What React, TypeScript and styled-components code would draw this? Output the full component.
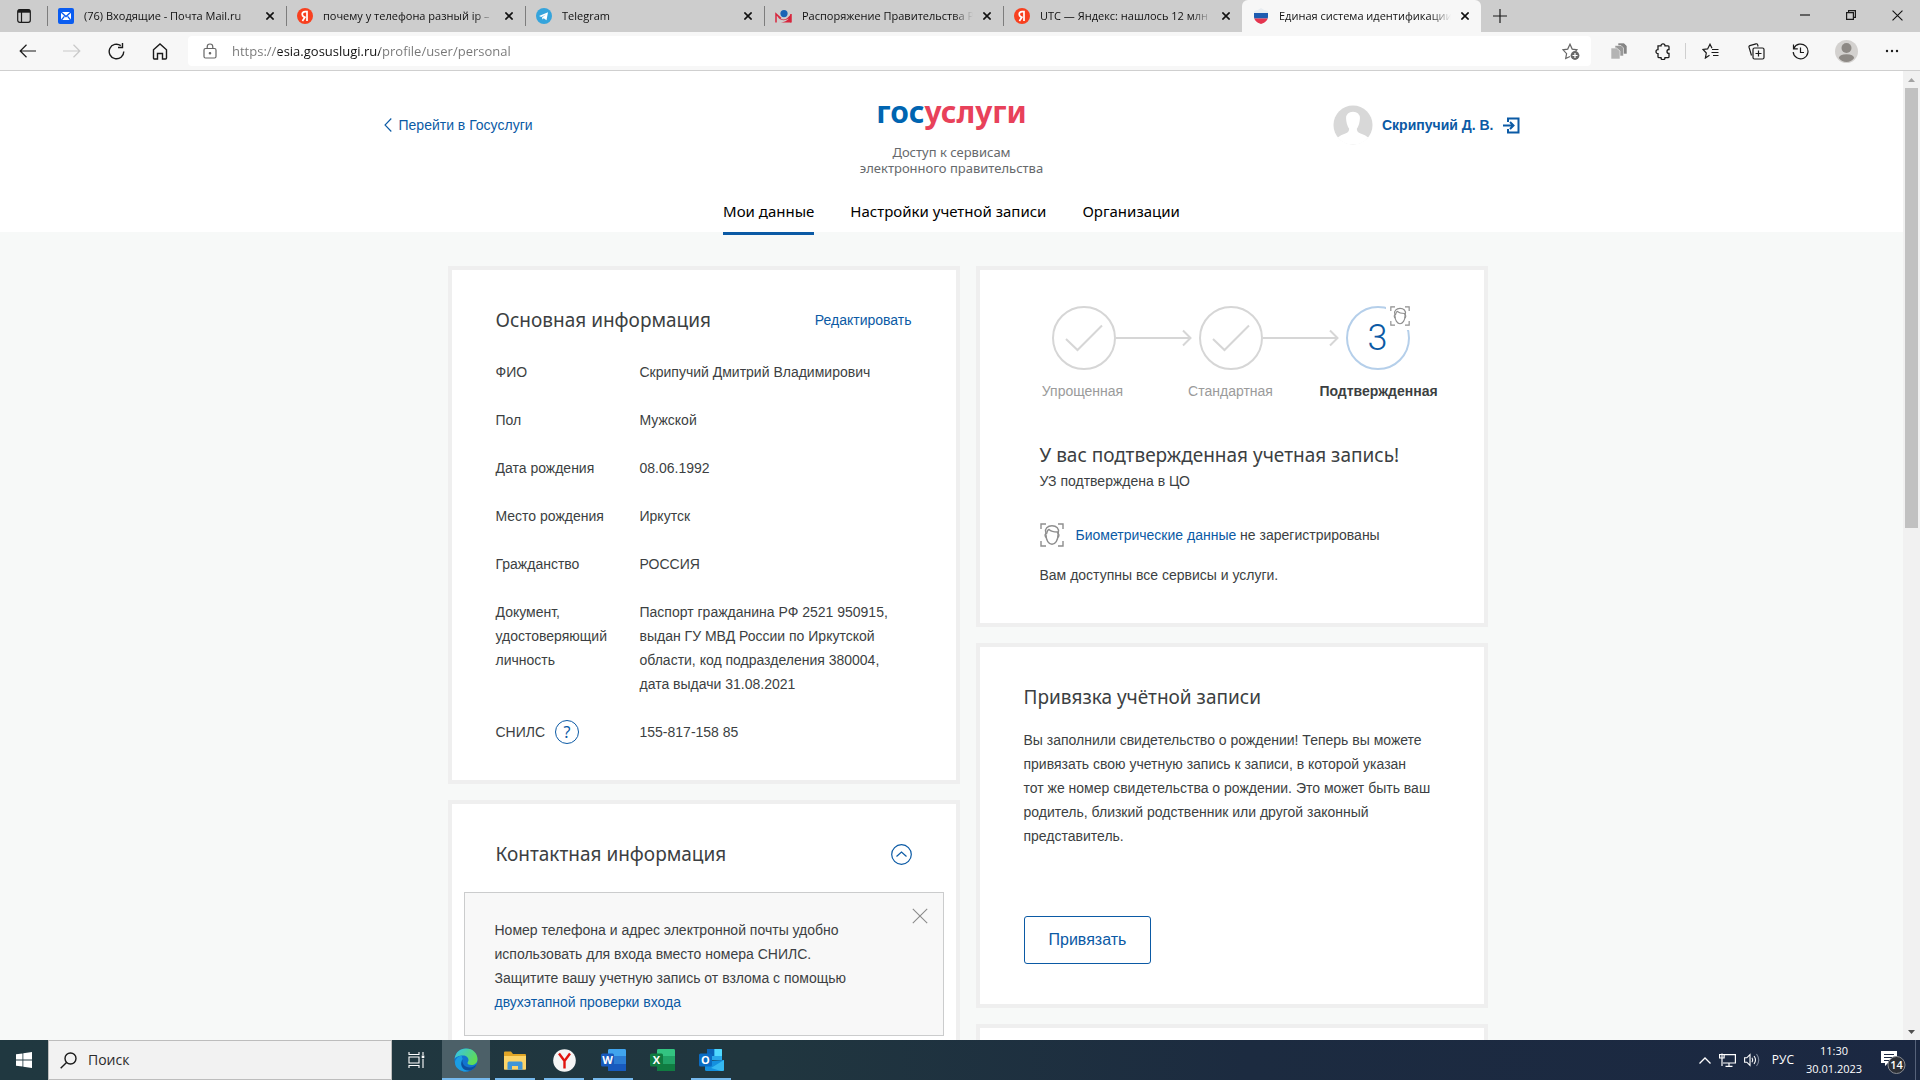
import React from "react";
import styled, { createGlobalStyle, css } from "styled-components";

const ui = `"Open Sans", "Noto Sans", sans-serif`;
const body = `"Liberation Sans", Arial, sans-serif`;
const heading = `"Noto Sans", "Open Sans", sans-serif`;
const blue = "#0b5aa5";
const text = "#3c3f42";

const Global = createGlobalStyle`
  *, *::before, *::after { box-sizing: border-box; }
  html, body { margin: 0; height: 100%; overflow: hidden; }
  body { font: 14px/24px ${body}; color: ${text}; }
  button { border: 0; padding: 0; background: none; font: inherit; color: inherit; cursor: pointer; }
  h1, h2, p, ol, ul, dl, dd, dt { margin: 0; padding: 0; list-style: none; font-weight: 400; }
  a { color: ${blue}; text-decoration: none; }
  svg { display: block; flex: none; }
`;

const Screen = styled.div`
  display: flex;
  flex-direction: column;
  height: 100vh;
  overflow: hidden;
`;

/* ---------- browser chrome ---------- */

const TabStrip = styled.div`
  display: flex;
  align-items: stretch;
  height: 32px;
  flex: none;
  background: #cdcdcd;
  color: #111;
  font: 11px/16px ${ui};
`;

const TabMenu = styled.button`
  display: grid;
  place-items: center;
  width: 47px;
`;

const Tab = styled.div<{ $active?: boolean }>`
  display: flex;
  align-items: center;
  gap: 10px;
  flex: 0 1 239px;
  min-width: 0;
  padding: 0 12px 0 11px;
  position: relative;
  ${(p) =>
    p.$active
      ? css`
          background: #f7f7f7;
          border-radius: 6px 6px 0 0;
        `
      : css`
          &::before {
            content: "";
            position: absolute;
            left: 0;
            top: 6px;
            bottom: 6px;
            width: 1px;
            background: #7d7d7d;
          }
        `}
`;

const TabTitle = styled.button`
  flex: 1;
  min-width: 0;
  overflow: hidden;
  white-space: nowrap;
  text-align: left;
  mask-image: linear-gradient(90deg, #000 88%, transparent);
`;

const Plain = styled.button`
  display: grid;
  place-items: center;
`;

const NewTab = styled(Plain)`
  width: 38px;
`;

const WindowButtons = styled.div`
  display: flex;
  margin-left: auto;
`;

const WindowButton = styled(Plain)`
  width: 46px;
  height: 30px;
`;

const Toolbar = styled.div`
  display: flex;
  align-items: center;
  height: 39px;
  flex: none;
  padding: 0 6px;
  background: #f7f7f7;
  border-bottom: 1px solid #cfcfcf;
`;

const ToolButton = styled(Plain)<{ $w?: number }>`
  width: ${(p) => p.$w ?? 44}px;
  height: 32px;
`;

const Address = styled.label`
  display: flex;
  align-items: center;
  gap: 15px;
  flex: 1;
  height: 30px;
  margin: 0 6px;
  padding: 0 11px 0 15px;
  background: #fff;
  border-radius: 4px;
`;

const AddressInput = styled.input`
  flex: 1;
  min-width: 0;
  border: 0;
  outline: 0;
  padding: 0;
  font: 13px/20px ${ui};
  color: #555;
  background: linear-gradient(90deg, #767676 46px, #111 46px, #111 148px, #767676 148px);
  background-clip: text;
  -webkit-text-fill-color: transparent;
`;

const ToolDivider = styled.span`
  width: 1px;
  height: 16px;
  background: #cfcfcf;
`;

/* ---------- page ---------- */

const Viewport = styled.div`
  display: flex;
  flex: 1;
  min-height: 0;
`;

const Page = styled.div`
  flex: 1;
  min-width: 0;
  overflow: hidden;
  background: #f7f9f8;
`;

const Scrollbar = styled.div`
  display: flex;
  flex-direction: column;
  align-items: center;
  width: 17px;
  padding: 7px 0 6px;
  background: #f1f1f1;
`;

const Thumb = styled.span`
  width: 13px;
  height: 46%;
  margin: 6px 0 auto;
  background: #c1c1c1;
`;

const Header = styled.header`
  display: grid;
  grid-template-columns: 1fr auto 1fr;
  height: 161px;
  background: #fff;
  padding: 0 calc(50% - 568px);
`;

const BackLink = styled.a`
  display: flex;
  align-items: center;
  gap: 7px;
  align-self: start;
  justify-self: start;
  margin-top: 42px;
`;

const Brand = styled.div`
  text-align: center;
  padding-top: 22px;
`;

const Logo = styled.a`
  display: block;
  font: 700 30px/38px ${heading};
  color: #0065b1;
  span {
    color: #e8415a;
  }
`;

const Tagline = styled.p`
  margin-top: 13px;
  font: 13px/16px ${heading};
  color: #66696c;
`;

const User = styled.div`
  display: flex;
  align-items: center;
  justify-self: end;
  align-self: start;
  gap: 9px;
  margin-top: 34px;
  a {
    font-weight: 700;
  }
`;

const Nav = styled.nav`
  grid-column: 1 / -1;
  display: flex;
  justify-content: center;
  align-self: end;
  gap: 36px;
  height: 36px;
`;

const NavLink = styled.a<{ $active?: boolean }>`
  font: 15px/30px ${heading};
  height: 39px;
  color: #000;
  border-bottom: 3px solid ${(p) => (p.$active ? blue : "transparent")};
`;

const Columns = styled.main`
  display: grid;
  grid-template-columns: repeat(2, minmax(0, 512px));
  justify-content: center;
  align-items: start;
  gap: 16px;
  padding: 34px 0 0 32px;
`;

const Column = styled.div`
  display: flex;
  flex-direction: column;
  gap: 16px;
`;

const Card = styled.section`
  background: #fff;
  border: 4px solid #efefef;
  padding: 34px 44px 36px;
`;

const CardHead = styled.div`
  display: flex;
  align-items: center;
  justify-content: space-between;
`;

const Title = styled.h2`
  font: 19px/32px ${heading};
`;

const Facts = styled.dl`
  display: grid;
  grid-template-columns: 120px 1fr;
  gap: 24px;
  margin-top: 24px;
`;

const Term = styled.dt`
  display: flex;
  align-items: center;
  align-self: start;
  gap: 10px;
`;

const Help = styled.button`
  width: 24px;
  height: 24px;
  border: 1px solid ${blue};
  border-radius: 50%;
  color: ${blue};
  font: 16px/22px ${heading};
`;

const ContactCard = styled(Card)`
  padding: 34px 12px 40px;
  ${CardHead} {
    padding: 0 32px;
  }
`;

const Notice = styled.div`
  display: flex;
  align-items: flex-start;
  justify-content: space-between;
  margin-top: 22px;
  padding: 0 15px 0 30px;
  border: 1px solid #cbcccd;
  background: #f8f8f8;
  p {
    padding: 25px 0 21px;
  }
  button {
    margin-top: 15px;
  }
`;

const StatusCard = styled(Card)`
  padding: 36px 28px 36px 60px;
`;

const Marks = styled.div`
  display: flex;
  align-items: center;
  padding-left: 12px;
`;

const Mark = styled.span<{ $current?: boolean }>`
  position: relative;
  display: grid;
  place-items: center;
  width: 64px;
  height: 64px;
  border: 2px solid ${(p) => (p.$current ? "#b5cfea" : "#d6d6d6")};
  border-radius: 50%;
  color: ${blue};
  font: 300 36px/60px Roboto, ${body};
`;

const MarkBadge = styled.span`
  position: absolute;
  top: -4px;
  right: -6px;
  padding: 2px 4px 4px;
  background: #fff;
`;

const Arrow = styled.svg`
  margin-right: 7px;
`;

const Labels = styled.ol`
  display: grid;
  grid-template-columns: repeat(3, 148px);
  margin: 9px 0 0 -31px;
  text-align: center;
  color: #9b9b9b;
`;

const Label = styled.li<{ $current?: boolean }>`
  ${(p) => p.$current && `font-weight: 700; color: ${text};`}
`;

const Biometric = styled.p`
  display: flex;
  align-items: center;
  gap: 12px;
  margin: 30px 0 16px;
`;

const StatusTitle = styled(Title)`
  margin-top: 38px;
  line-height: 28px;
`;

const LinkCard = styled(Card)`
  padding: 34px 36px 40px 44px;
  p {
    margin: 15px 0 68px;
  }
`;

const Outlined = styled.button`
  height: 48px;
  padding: 0 24px;
  border: 1px solid ${blue};
  border-radius: 3px;
  color: ${blue};
  font: 16px/24px ${body};
`;

/* ---------- taskbar ---------- */

const Taskbar = styled.footer`
  display: flex;
  align-items: stretch;
  height: 40px;
  flex: none;
  background: linear-gradient(90deg, #203840 0%, #20363f 40%, #1c2b40 65%, #1b2842 100%);
  color: #fff;
  font: 12px/18px ${ui};
`;

const Start = styled(Plain)`
  width: 48px;
`;

const Search = styled.label`
  display: flex;
  align-items: center;
  gap: 11px;
  width: 344px;
  padding-left: 11px;
  background: #f2f2f2;
  border: 1px solid #bdbdbd;
  input {
    border: 0;
    outline: 0;
    padding: 0;
    background: none;
    font: 14px/20px ${ui};
  }
  input::placeholder {
    color: #2b2b2b;
    opacity: 1;
  }
`;

const Apps = styled.div`
  display: flex;
  gap: 1px;
`;

const Tile = styled(Plain)<{ $open?: boolean; $active?: boolean }>`
  width: 48px;
  background: ${(p) => (p.$active ? "#4c6068" : "none")};
  background-image: ${(p) =>
    p.$open || p.$active ? "linear-gradient(#76b9ed, #76b9ed)" : "none"};
  background-repeat: no-repeat;
  background-position: bottom;
  background-size: ${(p) => (p.$active ? "48px" : "40px")} 2px;
`;

const TaskView = styled(Plain)`
  width: 49px;
`;

const Tray = styled.div`
  display: flex;
  align-items: center;
  margin-left: auto;
  gap: 8px;
  padding-right: 4px;
`;

const Clock = styled.time`
  width: 60px;
  margin-right: 8px;
  text-align: center;
  font-size: 11px;
`;

const Lang = styled.button`
  margin: 0 2px 0 4px;
`;

const ShowDesktop = styled.span`
  width: 1px;
  height: 100%;
  background: #56627a;
`;

/* ---------- drawings ---------- */

const Cross = ({ size = 8, w = 1.6, color = "#111" }: { size?: number; w?: number; color?: string }) => (
  <svg width={size} height={size} viewBox="0 0 8 8" stroke={color} strokeWidth={(w * 8) / size} fill="none">
    <path d="M.4.4 7.6 7.6M7.6.4.4 7.6" />
  </svg>
);

const MailIcon = () => (
  <svg width="16" height="16" viewBox="0 0 16 16">
    <rect width="16" height="16" rx="2" fill="#0a5cf0" />
    <path d="M3 4h10v8H3z" fill="#fff" />
    <path d="M3 4l5 4.6L13 4M3.4 12l3-3.6M12.6 12l-3-3.6" stroke="#0a5cf0" strokeWidth="1.3" fill="none" />
  </svg>
);

const YandexIcon = () => (
  <svg width="16" height="16" viewBox="0 0 16 16">
    <circle cx="8" cy="8" r="8" fill="#f8401f" />
    <path d="M10 13V3.6H8.2c-2 0-3 1.1-3 2.6 0 1.3.6 2 1.8 2.8M8.4 8.6 5.4 13" stroke="#fff" strokeWidth="1.7" fill="none" />
  </svg>
);

const TelegramIcon = () => (
  <svg width="16" height="16" viewBox="0 0 16 16">
    <circle cx="8" cy="8" r="8" fill="#35a4dc" />
    <path d="M3 8 12 4.3l-1.5 8-2.8-2-1.3 1.2-.3-2.3L10 6.4 5.2 9z" fill="#fff" />
  </svg>
);

const GovDocIcon = () => (
  <svg width="17" height="13" viewBox="0 0 17 13">
    <path d="M1 12.500V4l5 4.500M16 4v8.500" fill="none" stroke="#d7263d" strokeWidth="1.500" />
    <path d="M1 4q4 5.500 7.500 5.500T16 4v8.500H6q5-.5 8-4-6 3.500-10 0z" fill="#d7263d" />
    <circle cx="9" cy="3.600" r="3.600" fill="#1b63b5" />
  </svg>
);

const ShieldIcon = () => (
  <svg width="16" height="16" viewBox="0 0 16 16">
    <defs>
      <clipPath id="shield">
        <path d="M8 0q3 2.500 7 3v6q0 4.500-7 7-7-2.500-7-7V3q4-.5 7-3z" />
      </clipPath>
    </defs>
    <g clipPath="url(#shield)">
      <path d="M0 0h16v16H0z" fill="#e9edf1" />
      <path d="M0 5h16v5.500H0z" fill="#1d5bb0" />
      <path d="M0 10.500h16V16H0z" fill="#e5354f" />
    </g>
  </svg>
);

const Face = ({ size }: { size: number }) => (
  <svg width={size} height={size} viewBox="0 0 24 24" fill="none" stroke="#8e8e8e" strokeWidth="1.4">
    <path d="M1 6V1h5M18 1h5v5M23 18v5h-5M6 23H1v-5" />
    <path d="M5.800 12V9.500C4.500 6 7.500 2.800 12 2.800s7.500 3 6.300 7V12" />
    <path d="M6.500 11c1-3.500 1-4.500 2.500-4.500 2 2 6 2.500 8.500 2.500q.5 1 .5 2.500" />
    <path d="M6 12c0 5 2.700 9.300 6 9.300s6-4.300 6-9.300" />
    <path d="M5.800 11c-1.200.3-.8 2.800.5 3.500M18.200 11c1.200.3.800 2.800-.5 3.500" />
  </svg>
);

const Check = () => (
  <svg width="38" height="28" viewBox="0 0 38 28" fill="none" stroke="#d6d6d6" strokeWidth="2">
    <path d="M1 15 12.500 26 37 1.500" />
  </svg>
);

const StepArrow = () => (
  <Arrow width="76" height="18" viewBox="0 0 76 18" fill="none" stroke="#d6d6d6" strokeWidth="2">
    <path d="M0 9h75M67 1.500 74.500 9 67 16.500" />
  </Arrow>
);

const Office = ({ letter, dark, mid, light }: { letter: string; dark: string; mid: string; light: string }) => (
  <svg width="25" height="22" viewBox="0 0 25 22">
    <rect x="7" width="18" height="22" rx="1.500" fill={mid} />
    <path d="M7 1.500Q7 0 8.500 0h15Q25 0 25 1.500V7H7z" fill={light} />
    <path d="M7 15h18v5.500q0 1.500-1.500 1.500h-15Q7 22 7 20.500z" fill={dark} />
    <rect y="4.500" width="13" height="13" rx="1.500" fill={dark} />
    <text x="6.500" y="15" textAnchor="middle" fill="#fff" fontFamily="Open Sans" fontWeight="700" fontSize="11">
      {letter}
    </text>
  </svg>
);

const OutlookIcon = () => (
  <svg width="25" height="22" viewBox="0 0 25 22">
    <path d="M8 1q0-1 1-1h13q1 0 1 1v10H8z" fill="#28a8ea" />
    <path d="M8 0h7.500v7H8z" fill="#0a64b8" />
    <path d="M15.500 0H22q1 0 1 1v6h-7.500z" fill="#50d9ff" />
    <path d="M6 12 25 11v9.500q0 1.500-1.500 1.500h-16Q6 22 6 20.500z" fill="#1490df" />
    <path d="M25 11 12 19l10 3h1.500q1.500 0 1.500-1.500z" fill="#35b8f1" />
    <rect y="4.500" width="13" height="13" rx="1.500" fill="#0a6cc4" />
    <text x="6.500" y="15" textAnchor="middle" fill="#fff" fontFamily="Open Sans" fontWeight="700" fontSize="11">
      O
    </text>
  </svg>
);

const stroke = { fill: "none", stroke: "#1b1b1b", strokeWidth: 1.2 } as const;

const tabs = [
  { title: "(76) Входящие - Почта Mail.ru", icon: <MailIcon /> },
  { title: "почему у телефона разный ip –", icon: <YandexIcon /> },
  { title: "Telegram", icon: <TelegramIcon /> },
  { title: "Распоряжение Правительства Р", icon: <GovDocIcon /> },
  { title: "UTC — Яндекс: нашлось 12 млн", icon: <YandexIcon /> },
  { title: "Единая система идентификации", icon: <ShieldIcon />, active: true },
];

const facts: [string, React.ReactNode][] = [
  ["ФИО", "Скрипучий Дмитрий Владимирович"],
  ["Пол", "Мужской"],
  ["Дата рождения", "08.06.1992"],
  ["Место рождения", "Иркутск"],
  ["Гражданство", "РОССИЯ"],
  [
    "Документ, удостоверяющий личность",
    "Паспорт гражданина РФ 2521 950915, выдан ГУ МВД России по Иркутской области, код подразделения 380004, дата выдачи 31.08.2021",
  ],
  ["СНИЛС", "155-817-158 85"],
];

function Chrome() {
  return (
    <>
      <TabStrip>
        <TabMenu aria-label="Меню вкладок">
          <svg width="14" height="14" viewBox="0 0 14 14" {...stroke}>
            <rect x=".7" y=".7" width="12.600" height="12.600" rx="2" />
            <path d="M1 2.200h12" strokeWidth="3" />
            <path d="M4.500 3v10" />
          </svg>
        </TabMenu>
        {tabs.map((t) => (
          <Tab key={t.title} $active={t.active}>
            {t.icon}
            <TabTitle>{t.title}</TabTitle>
            <Plain aria-label="Закрыть вкладку">
              <Cross />
            </Plain>
          </Tab>
        ))}
        <NewTab aria-label="Новая вкладка">
          <svg width="14" height="14" viewBox="0 0 14 14" {...stroke}>
            <path d="M7 0v14M0 7h14" />
          </svg>
        </NewTab>
        <WindowButtons>
          <WindowButton aria-label="Свернуть">
            <svg width="10" height="10" viewBox="0 0 10 10" {...stroke}>
              <path d="M0 5h10" />
            </svg>
          </WindowButton>
          <WindowButton aria-label="Восстановить">
            <svg width="10" height="10" viewBox="0 0 10 10" {...stroke}>
              <path d="M.6 2.600h6.800v6.800H.6zM2.600 2.600v-2h6.800v6.800h-2" />
            </svg>
          </WindowButton>
          <WindowButton aria-label="Закрыть">
            <Cross size={11} w={1.1} />
          </WindowButton>
        </WindowButtons>
      </TabStrip>
      <Toolbar>
        <ToolButton aria-label="Назад">
          <svg width="18" height="14" viewBox="0 0 18 14" {...stroke}>
            <path d="M17 7H1.500M7.500.8 1.200 7l6.300 6.200" />
          </svg>
        </ToolButton>
        <ToolButton aria-label="Вперёд" disabled>
          <svg width="18" height="14" viewBox="0 0 18 14" {...stroke} stroke="#c9c9c9">
            <path d="M0 7h16.500M10.500.8 16.800 7l-6.300 6.200" />
          </svg>
        </ToolButton>
        <ToolButton aria-label="Обновить">
          <svg width="17" height="17" viewBox="0 0 17 17" {...stroke} strokeWidth={1.4}>
            <path d="M15.800 8.500a7.300 7.300 0 1 1-3-5.900M10 4.500h4.500V0" />
          </svg>
        </ToolButton>
        <ToolButton aria-label="Домой">
          <svg width="16" height="17" viewBox="0 0 16 17" {...stroke} strokeWidth={1.4}>
            <path d="M1.500 6.800 8 1l6.500 5.800V15a1 1 0 0 1-1 1h-3v-5.500h-5V16h-3a1 1 0 0 1-1-1z" />
          </svg>
        </ToolButton>
        <Address>
          <svg width="14" height="16" viewBox="0 0 14 16" {...stroke} stroke="#666">
            <rect x="1" y="5.500" width="12" height="9.500" rx="1.500" />
            <path d="M4.200 5.500V3.800a2.800 2.800 0 0 1 5.600 0v1.700" />
            <circle cx="7" cy="10.200" r=".7" fill="#555" />
          </svg>
          <AddressInput
            aria-label="Адрес страницы"
            defaultValue="https://esia.gosuslugi.ru/profile/user/personal"
          />
          <Plain aria-label="Добавить в избранное">
            <svg width="18" height="17" viewBox="0 0 18 17" {...stroke} stroke="#666">
              <path d="M8 13.500l-4.300 2 .9-4.900L1 6.800l4.700-.7L8 1.200l2.200 4.900 4.700.7-1.400 1.500" />
              <circle cx="13" cy="12.500" r="4.400" fill="#666" stroke="none" />
              <path d="M13 10v5M10.500 12.500h5" stroke="#fff" />
            </svg>
          </Plain>
        </Address>
        <ToolButton aria-label="Расширение">
          <svg width="16" height="16" viewBox="0 0 16 16" stroke="#f7f7f7" strokeWidth=".6">
            <path d="M7 0h6l3 3v8H7z" fill="#858585" />
            <path d="M4 2.500h6l2.500 2.500v8H4z" fill="#999" />
            <path d="M0 5h5.500L9 8v8H0z" fill="#b4b4b4" />
          </svg>
        </ToolButton>
        <ToolButton aria-label="Расширения">
          <svg width="16" height="17" viewBox="0 0 16 17" {...stroke} strokeWidth={1.300}>
            <path d="M3 2.800h3a2 2 0 0 1 4 0h3a1 1 0 0 1 1 1V6.500a2 2 0 0 0 0 4v3.200a1 1 0 0 1-1 1h-3a2 2 0 0 1-4 0H4a1 1 0 0 1-1-1v-3a2 2 0 0 1 0-4z" />
          </svg>
        </ToolButton>
        <ToolDivider />
        <ToolButton $w={48} aria-label="Избранное">
          <svg width="17" height="16" viewBox="0 0 17 16" {...stroke}>
            <path d="M7.500 12.200 3.400 15l.9-5L1 6.500l4.600-.6L8 1.200l2 4M10 6.500h6.500M9.500 9.500h7M11 12.500h5.500" />
          </svg>
        </ToolButton>
        <ToolButton aria-label="Коллекции">
          <svg width="17" height="17" viewBox="0 0 17 17" {...stroke}>
            <path d="M3.500 12.500 1 4.200q-.3-1.200.8-1.600L8 .8q1.200-.3 1.600.8l.5 1.900" />
            <rect x="5" y="5" width="11" height="11" rx="1.500" />
            <path d="M10.500 7.500v6M7.500 10.500h6" />
          </svg>
        </ToolButton>
        <ToolButton aria-label="Журнал">
          <svg width="17" height="17" viewBox="0 0 17 17" {...stroke}>
            <path d="M1.500 1.500v4.300h4.300M1.800 5.500A7.400 7.400 0 1 1 1.200 9M8.500 4.500V9.500H12" />
          </svg>
        </ToolButton>
        <ToolButton $w={48} aria-label="Профиль">
          <svg width="23" height="23" viewBox="0 0 23 23">
            <circle cx="11.500" cy="11.500" r="11.500" fill="#d3d1cf" />
            <circle cx="11.500" cy="8" r="5" fill="#8d8985" />
            <path d="M3.800 18q.5-3.800 7.700-3.800t7.700 3.800q-3 4-7.700 4t-7.700-4z" fill="#8d8985" />
          </svg>
        </ToolButton>
        <ToolButton aria-label="Ещё">
          <svg width="14" height="4" viewBox="0 0 14 4" fill="#1b1b1b">
            <circle cx="2" cy="2" r="1.200" />
            <circle cx="7" cy="2" r="1.200" />
            <circle cx="12" cy="2" r="1.200" />
          </svg>
        </ToolButton>
      </Toolbar>
    </>
  );
}

function PageHeader() {
  return (
    <Header>
      <BackLink href="#">
        <svg width="8" height="14" viewBox="0 0 8 14" fill="none" stroke={blue} strokeWidth="1.100">
          <path d="M7.300.5 1 7l6.300 6.500" />
        </svg>
        Перейти в Госуслуги
      </BackLink>
      <Brand>
        <Logo href="#">
          гос<span>услуги</span>
        </Logo>
        <Tagline>
          Доступ к сервисам
          <br />
          электронного правительства
        </Tagline>
      </Brand>
      <User>
        <svg width="40" height="40" viewBox="0 0 42 42">
          <circle cx="21" cy="21" r="20.500" fill="#d8d8d8" />
          <path d="M5 34q3-2.500 8-4 4-1.300 4-5-3-4-3.300-11Q14 7 21 7t7.300 7Q28 21 25 25q0 3.700 4 5 5 1.500 8 4-6 7.500-16 7.500T5 34z" fill="#fff" />
        </svg>
        <a href="#">Скрипучий Д. В.</a>
        <Plain aria-label="Выйти">
          <svg width="17" height="17" viewBox="0 0 17 17" fill="none" stroke={blue} strokeWidth="2">
            <path d="M5 5V1.500h10.500v14H5V12M0 8.500h10M7 5l3.500 3.500L7 12" />
          </svg>
        </Plain>
      </User>
      <Nav>
        <NavLink href="#" $active>
          Мои данные
        </NavLink>
        <NavLink href="#">Настройки учетной записи</NavLink>
        <NavLink href="#">Организации</NavLink>
      </Nav>
    </Header>
  );
}

export default function App() {
  return (
    <Screen>
      <Global />
      <Chrome />
      <Viewport>
        <Page>
          <PageHeader />
          <Columns>
            <Column>
              <Card>
                <CardHead>
                  <Title>Основная информация</Title>
                  <a href="#">Редактировать</a>
                </CardHead>
                <Facts>
                  {facts.map(([term, value]) => (
                    <React.Fragment key={term}>
                      <Term>
                        {term}
                        {term === "СНИЛС" && <Help aria-label="Что такое СНИЛС">?</Help>}
                      </Term>
                      <dd>{value}</dd>
                    </React.Fragment>
                  ))}
                </Facts>
              </Card>
              <ContactCard>
                <CardHead>
                  <Title>Контактная информация</Title>
                  <Plain aria-label="Свернуть раздел">
                    <svg width="21" height="21" viewBox="0 0 21 21" fill="none" stroke={blue} strokeWidth="1.200">
                      <circle cx="10.500" cy="10.500" r="9.800" />
                      <path d="M5.500 12.500l5-4.500 5 4.500" />
                    </svg>
                  </Plain>
                </CardHead>
                <Notice>
                  <p>
                    Номер телефона и адрес электронной почты удобно
                    <br />
                    использовать для входа вместо номера СНИЛС.
                    <br />
                    Защитите вашу учетную запись от взлома с помощью
                    <br />
                    <a href="#">двухэтапной проверки входа</a>
                  </p>
                  <Plain aria-label="Закрыть подсказку">
                    <Cross size={16} w={1.1} color="#8b8b8b" />
                  </Plain>
                </Notice>
              </ContactCard>
            </Column>
            <Column>
              <StatusCard>
                <Marks>
                  <Mark>
                    <Check />
                  </Mark>
                  <StepArrow />
                  <Mark>
                    <Check />
                  </Mark>
                  <StepArrow />
                  <Mark $current>
                    3
                    <MarkBadge>
                      <Face size={20} />
                    </MarkBadge>
                  </Mark>
                </Marks>
                <Labels>
                  <Label>Упрощенная</Label>
                  <Label>Стандартная</Label>
                  <Label $current>Подтвержденная</Label>
                </Labels>
                <StatusTitle>У вас подтвержденная учетная запись!</StatusTitle>
                <p>УЗ подтверждена в ЦО</p>
                <Biometric>
                  <Face size={24} />
                  <span>
                    <a href="#">Биометрические данные</a> не зарегистрированы
                  </span>
                </Biometric>
                <p>Вам доступны все сервисы и услуги.</p>
              </StatusCard>
              <LinkCard>
                <Title>Привязка учётной записи</Title>
                <p>
                  Вы заполнили свидетельство о рождении! Теперь вы можете
                  <br />
                  привязать свою учетную запись к записи, в которой указан
                  <br />
                  тот же номер свидетельства о рождении. Это может быть ваш
                  <br />
                  родитель, близкий родственник или другой законный
                  <br />
                  представитель.
                </p>
                <Outlined>Привязать</Outlined>
              </LinkCard>
              <Card />
            </Column>
          </Columns>
        </Page>
        <Scrollbar>
          <svg width="7" height="4" viewBox="0 0 7 4" fill="#a3a3a3">
            <path d="M0 4 3.500 0 7 4z" />
          </svg>
          <Thumb />
          <svg width="7" height="4" viewBox="0 0 7 4" fill="#505050">
            <path d="M0 0 3.500 4 7 0z" />
          </svg>
        </Scrollbar>
      </Viewport>
      <Taskbar>
        <Start aria-label="Пуск">
          <svg width="16" height="16" viewBox="0 0 16 16" fill="#fff">
            <path d="M0 2.300 6.500 1.400v6.200H0zM7.300 1.300 16 0v7.600H7.300zM0 8.400h6.500v6.200L0 13.700zM7.300 8.400H16V16l-8.700-1.300z" />
          </svg>
        </Start>
        <Search>
          <svg width="17" height="17" viewBox="0 0 17 17" {...stroke} strokeWidth={1.400}>
            <circle cx="10.500" cy="6.500" r="5.500" />
            <path d="M6.500 10.500.7 16.300" />
          </svg>
          <input aria-label="Поиск" placeholder="Поиск" />
        </Search>
        <Apps>
          <TaskView aria-label="Представление задач">
            <svg width="17" height="16" viewBox="0 0 17 16" fill="none" stroke="#fff" strokeWidth="1.100">
              <path d="M1 0v2.500h10V0M1 16v-2.500h10V16M1 5h10v6H1zM15 0v3M15 7v9" />
              <path d="M13.700 3.500h2.600v2.600h-2.600z" fill="#fff" stroke="none" />
            </svg>
          </TaskView>
          <Tile $active aria-label="Edge">
            <svg width="24" height="24" viewBox="0 0 24 24">
              <defs>
                <linearGradient id="edgeTop" x1="0" y1="0" x2="1" y2=".5">
                  <stop offset="0" stopColor="#35c1f1" />
                  <stop offset="1" stopColor="#5fdc55" />
                </linearGradient>
              </defs>
              <circle cx="12" cy="12" r="11.500" fill="#1273cf" />
              <path d="M.6 11C1.500 4 6 .5 12 .5c7 0 11.500 5 11.500 10.500 0 4-3 6-6 6-2.500 0-4-1-4-2 0-.8 1-1.300 1-3 0-2.500-2.500-4.500-5.500-4.500C5 7.500 1.500 9 .6 11z" fill="url(#edgeTop)" />
              <path d="M9 11c-2.500 5 1 10.500 7 11.500-5 2.300-12 .5-14.500-5C-.5 12 4 7.500 9 7.500c-2 .5-1 2.500 0 3.500z" fill="#1b9de2" />
              <path d="M9 10.500c-2 5 2 9 6.500 9 3 0 5.500-1.500 7-3-1.500 4-5 6-8 6C8 22.500 5 16 9 10.500z" fill="#0d4f9f" />
            </svg>
          </Tile>
          <Tile $open aria-label="Проводник">
            <svg width="22" height="19" viewBox="0 0 22 19">
              <path d="M0 1.500Q0 .5 1 .5h6l2 2.500h12q1 0 1 1V18H0z" fill="#e0a526" />
              <path d="M0 5h22v13q0 .8-.8.8H.8Q0 18.800 0 18z" fill="#fcd468" />
              <path d="M3.500 18.800V12q0-1.500 1.500-1.500h12q1.500 0 1.500 1.500v6.800h-4.500V15h-6v3.800z" fill="#3f95d8" />
            </svg>
          </Tile>
          <Tile $open aria-label="Яндекс Браузер">
            <svg width="23" height="23" viewBox="0 0 23 23">
              <circle cx="11.500" cy="11.500" r="11.300" fill="#f5f5f5" />
              <path d="M6 4.500l5.500 7.500L17 4.500M11.500 11.500v8" fill="none" stroke="#e1140e" strokeWidth="2.400" />
            </svg>
          </Tile>
          <Tile $open aria-label="Word">
            <Office letter="W" dark="#185abd" mid="#2b7cd3" light="#41a5ee" />
          </Tile>
          <Tile aria-label="Excel">
            <Office letter="X" dark="#107c41" mid="#21a366" light="#33c481" />
          </Tile>
          <Tile $open aria-label="Outlook">
            <OutlookIcon />
          </Tile>
        </Apps>
        <Tray>
          <Plain aria-label="Скрытые значки">
            <svg width="12" height="7" viewBox="0 0 12 7" fill="none" stroke="#fff" strokeWidth="1.300">
              <path d="M.5 6.500 6 1l5.500 5.500" />
            </svg>
          </Plain>
          <Plain aria-label="Сеть">
            <svg width="17" height="14" viewBox="0 0 17 14" fill="none" stroke="#fff" strokeWidth="1.200">
              <path d="M5 1.600h11.400V10H4M3 .6v5M.6 1.500h4.500V5H.6zM3 5v8M10 10v3M6.500 13.300h7" />
            </svg>
          </Plain>
          <Plain aria-label="Громкость">
            <svg width="16" height="14" viewBox="0 0 16 14" fill="none" stroke="#fff" strokeWidth="1.100">
              <path d="M.6 4.800h2.200L6 1.600v10.800L2.800 9.200H.6zM8 4.800q1.500 2.200 0 4.400M10 3q3 4 0 8" />
              <path d="M12.500 1q4.500 6 0 12" stroke="#7d879a" />
            </svg>
          </Plain>
          <Lang>РУС</Lang>
          <Clock>
            11:30
            <br />
            30.01.2023
          </Clock>
          <Plain aria-label="Уведомления: 14">
            <svg width="27" height="28" viewBox="0 0 27 28">
              <path d="M1 5h16v12H8l-3 3v-3H1z" fill="#fff" />
              <path d="M4 8.500h10M4 11.500h10M4 14.500h6" stroke="#1b2842" strokeWidth="1.200" />
              <circle cx="16.500" cy="19" r="8.500" fill="#2c2f36" stroke="#8a8d93" />
              <text x="16.500" y="23" textAnchor="middle" fill="#fff" fontFamily="Open Sans" fontWeight="600" fontSize="11">
                14
              </text>
            </svg>
          </Plain>
          <ShowDesktop />
        </Tray>
      </Taskbar>
    </Screen>
  );
}
